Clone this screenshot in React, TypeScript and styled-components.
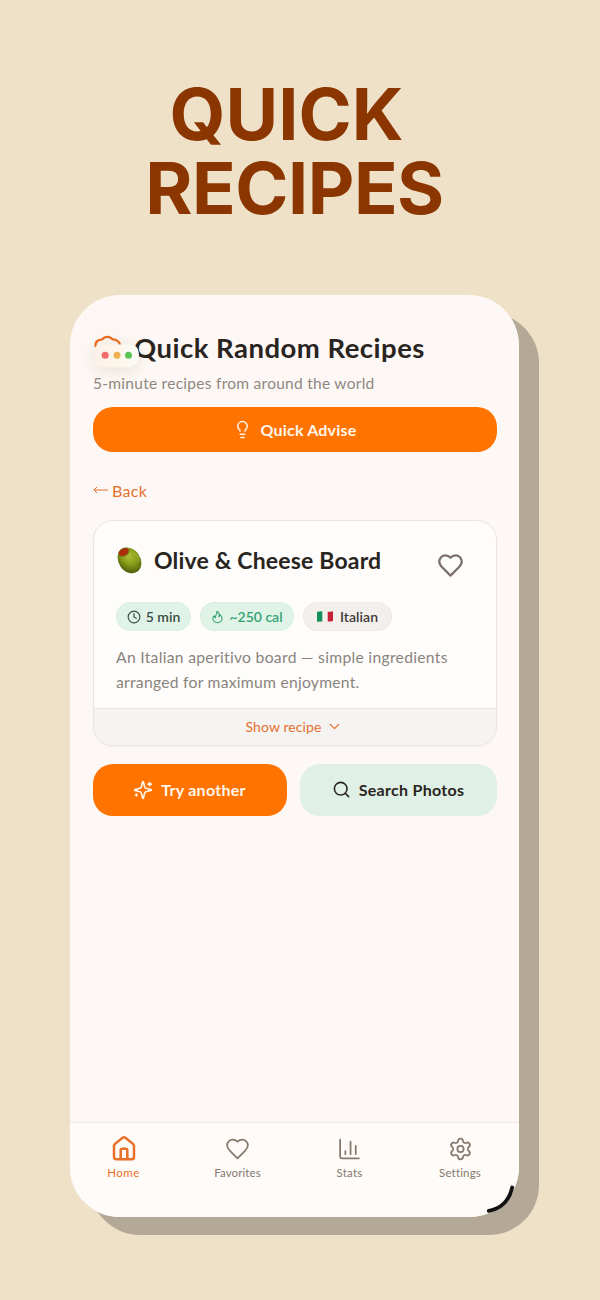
import React from "react";
import styled, { createGlobalStyle } from "styled-components";
import { ChartColumn, ChevronDown, Clock, Lightbulb, Search, Settings } from "lucide-react";

const Global = createGlobalStyle`
  * { box-sizing: border-box; }
  body { margin: 0; background: #efe1c8; font-family: Lato, "Open Sans", sans-serif; color: #292420; }
`;

const Page = styled.div`
  width: 600px;
  height: 1300px;
  background: #efe1c8;
  overflow: hidden;
  display: flex;
  flex-direction: column;
`;

const Headline = styled.h1`
  margin: 77px 0 0 -10px;
  height: 218px;
  font: 700 72px/74px Inter, sans-serif;
  color: #8b3600;
  text-align: center;
`;

const Line = styled.div<{ $ls: number; $inset?: number }>`
  letter-spacing: ${(p) => p.$ls}px;
  padding-right: ${(p) => p.$inset ?? 0}px;
`;

const Phone = styled.main`
  margin-left: 70px;
  width: 449px;
  height: 922px;
  border-radius: 50px;
  background: #fdf8f5;
  box-shadow: 20px 18px 0 #b4a997;
  display: flex;
  flex-direction: column;
  position: relative;
`;

const Content = styled.div`
  flex: 1;
  padding: 35px 22px 0 23px;
`;

const Label = styled.span<{ $size: number; $ls?: number; $weight?: number; $color?: string }>`
  font-size: ${(p) => p.$size}px;
  letter-spacing: ${(p) => p.$ls ?? 0}px;
  font-weight: ${(p) => p.$weight ?? 400};
  color: ${(p) => p.$color ?? "inherit"};
  white-space: nowrap;
`;

const TitleRow = styled.header`
  height: 36px;
  display: flex;
  align-items: center;
  padding: 0 0 1px 41px;
  position: relative;
`;

const Logo = styled.div`
  position: absolute;
  left: 0;
  top: 2px;
  width: 46px;
  height: 38px;
  filter: drop-shadow(0 3px 8px rgba(90, 60, 40, 0.13));
`;

const Subtitle = styled.div`
  height: 32px;
  line-height: 33px;
  margin-bottom: 9px;
`;

const Button = styled.button<{ $width: number; $height: number; $gap: number; $mint?: boolean }>`
  width: ${(p) => p.$width}px;
  height: ${(p) => p.$height}px;
  border: 0;
  padding: 0 1px 1px 0;
  border-radius: 20px;
  background: ${(p) => (p.$mint ? "#e0f0e6" : "#ff7300")};
  color: ${(p) => (p.$mint ? "#292420" : "#fff5ea")};
  font-family: inherit;
  display: flex;
  align-items: center;
  justify-content: center;
  gap: ${(p) => p.$gap}px;
`;

const Back = styled.div`
  margin-top: 23px;
  height: 30px;
  display: flex;
  align-items: center;
  gap: 4px;
  color: #e3702f;
`;

const Card = styled.section`
  margin-top: 15px;
  height: 226px;
  border: 1px solid #e9e5e2;
  border-radius: 20px;
  background: #fefdfb;
  overflow: hidden;
  display: flex;
  flex-direction: column;
  box-shadow: 0 1px 2px rgba(80, 60, 40, 0.06);
`;

const CardBody = styled.div`
  flex: 1;
  padding: 21px 32px 0 22px;
`;

const CardTitle = styled.div`
  height: 36px;
  display: flex;
  align-items: center;
  gap: 10px;
  & > :last-child { margin: 11px 0 0 auto; color: #7b6f6a; }
`;

const Chips = styled.div`
  display: flex;
  gap: 9px;
  margin: 24px 0 14px;
`;

const Chip = styled.div<{ $width: number; $bg: string; $fg: string; $gap: number }>`
  width: ${(p) => p.$width}px;
  height: 29px;
  border-radius: 15px;
  border: 1px solid rgba(60, 70, 60, 0.03);
  background: ${(p) => p.$bg};
  color: ${(p) => p.$fg};
  display: flex;
  align-items: center;
  justify-content: center;
  gap: ${(p) => p.$gap}px;
`;

const Description = styled.div`
  display: flex;
  flex-direction: column;
  line-height: 24.5px;
  color: #8a837d;
`;

const CardFooter = styled.div`
  height: 37px;
  padding: 0 2px 1px 0;
  border-top: 1px solid #e8e5e3;
  background: #f6f4f3;
  color: #e3702f;
  display: flex;
  align-items: center;
  justify-content: center;
  gap: 4px;
`;

const Actions = styled.div`
  margin-top: 18px;
  display: flex;
  gap: 13px;
`;

const Nav = styled.nav`
  height: 95px;
  border-top: 1px solid #efe9e6;
  background: #fefbf8;
  border-radius: 0 0 50px 50px;
  display: flex;
  padding-top: 12px;
`;

const NavItem = styled.div<{ $width: number; $active?: boolean }>`
  width: ${(p) => p.$width}px;
  display: flex;
  flex-direction: column;
  align-items: center;
  gap: 2px;
  color: ${(p) => (p.$active ? "#e8702a" : "#85796f")};
  & > svg { height: 28px; }
  & > span { margin-top: 1px; }
`;

const CornerMark = styled.svg`
  position: absolute;
  right: 0;
  bottom: 0;
`;

function HeartIcon({ size, width = 2 }: { size: number; width?: number }) {
  return (
    <svg width={size} height={size} viewBox="0 0 24 24" fill="none" stroke="currentColor" strokeWidth={width} strokeLinecap="round" strokeLinejoin="round">
      <path d="M19 14c1.49-1.46 3-3.21 3-5.5A5.5 5.5 0 0 0 16.5 3c-1.76 0-3 .5-4.5 2-1.5-1.5-2.74-2-4.5-2A5.5 5.5 0 0 0 2 8.5c0 2.3 1.5 4.05 3 5.5l7 7Z" />
    </svg>
  );
}

function HomeIcon() {
  return (
    <svg width="28" height="28" viewBox="0 0 28 28" fill="none" stroke="currentColor" strokeWidth="2.5" strokeLinecap="round" strokeLinejoin="round">
      <path d="M4 10.900c0-.8.3-1.500 1-2L12.600 2.800a2.200 2.200 0 0 1 2.800 0L23 8.900c.7.5 1 1.200 1 2V22a2.200 2.200 0 0 1-2.200 2.200H6.200A2.200 2.200 0 0 1 4 22Z" />
      <path d="M10.700 24V15a1.300 1.300 0 0 1 1.300-1.300h4a1.300 1.300 0 0 1 1.300 1.300V24" />
    </svg>
  );
}

function FlameIcon() {
  return (
    <svg width="13" height="14" viewBox="0 0 24 24" fill="none" stroke="currentColor" strokeWidth="2" strokeLinecap="round" strokeLinejoin="round">
      <path d="M11 1.500c3.500 2 5 5.500 3.500 10 2-.5 2.500-2 2.500-3.500 2.200 2 3.500 4 3.500 6.500a8.500 8 0 0 1-17 0c0-2 .5-3.500 2-4.500 .3 2 1 3 2.500 3.500C7.500 9 11.500 6.500 11 1.500Z" />
    </svg>
  );
}

function SparklesIcon() {
  return (
    <svg width="20" height="20" viewBox="0 0 24 24" fill="none" stroke="currentColor" strokeWidth="2" strokeLinecap="round" strokeLinejoin="round">
      <path d="M9.937 15.500A2 2 0 0 0 8.500 14.063l-6.135-1.582a.5.5 0 0 1 0-.962L8.500 9.936A2 2 0 0 0 9.937 8.500l1.582-6.135a.5.5 0 0 1 .963 0L14.063 8.500A2 2 0 0 0 15.500 9.937l6.135 1.581a.5.5 0 0 1 0 .964L15.500 14.063a2 2 0 0 0-1.437 1.437l-1.582 6.135a.5.5 0 0 1-.963 0z" />
      <path d="M20 3v4M22 5h-4M4 17v2M5 18H3" />
    </svg>
  );
}

function Olive() {
  return (
    <svg width="28" height="28" viewBox="0 0 28 28">
      <defs>
        <radialGradient id="olive" cx="0.6" cy="0.36" r="0.68">
          <stop offset="0" stopColor="#b0bd35" />
          <stop offset="0.5" stopColor="#879c18" />
          <stop offset="1" stopColor="#4a5c0a" />
        </radialGradient>
      </defs>
      <ellipse cx="13.500" cy="14.400" rx="10.900" ry="13.700" transform="rotate(-35 13.500 14.400)" fill="url(#olive)" />
      <ellipse cx="7.900" cy="6.200" rx="6" ry="4.200" transform="rotate(-28 7.900 6.200)" fill="#7c7826" />
      <ellipse cx="7.700" cy="6" rx="5.200" ry="3.400" transform="rotate(-28 7.700 6)" fill="#ab2c0c" />
      <path d="M18 7c3 2 4.500 5 4.500 8" stroke="#cbd45d" strokeWidth="1.300" opacity=".4" fill="none" strokeLinecap="round" />
    </svg>
  );
}

function Flag() {
  return (
    <svg width="16" height="11" viewBox="0 0 16 11">
      <path fill="#f3f1ed" d="M0 .8Q4 0 8 .6T16 .2V10Q12 10.900 8 10.300T0 10.800Z" />
      <path fill="#16905a" d="M0 .8Q3 .2 5.300 .4V10.400Q3 10.300 0 10.800Z" />
      <path fill="#c82238" d="M10.700 .7Q13 .8 16 .2V10Q13 10.700 10.700 10.500Z" />
    </svg>
  );
}

export default function App() {
  return (
    <Page>
      <Global />
      <Headline>
        <Line $ls={0} $inset={17}>QUICK</Line>
        <Line $ls={-0.5} $inset={1}>RECIPES</Line>
      </Headline>
      <Phone>
        <Content>
          <TitleRow>
            <Label $size={27.5} $weight={700} $ls={0.48}>Quick Random Recipes</Label>
            <Logo>
              <svg width="46" height="38" viewBox="0 0 46 38">
                <defs>
                  <linearGradient id="tray">
                    <stop offset="0" stopColor="#fdf0e9" />
                    <stop offset="0.5" stopColor="#fdf6ea" />
                    <stop offset="1" stopColor="#fbfcf8" />
                  </linearGradient>
                </defs>
                <path d="M2.800 15C1.500 10 5 7.500 9 7.500C12 3.800 17 4.200 19.500 7.300C23.500 7.500 26 9 27 12.500" fill="none" stroke="#e96a1c" strokeWidth="2.200" strokeLinecap="round" />
                <path d="M1.500 20C1.500 14 4 12 9 12.500H37Q46 13 46 22.500T37 35.500H10Q1.500 35.500 1.500 28Z" fill="url(#tray)" />
                <circle cx="12.200" cy="23.300" r="3.500" fill="#f26c6d" />
                <circle cx="24" cy="23.300" r="3.500" fill="#efb050" />
                <circle cx="35.500" cy="23.300" r="3.500" fill="#5bc454" />
              </svg>
            </Logo>
          </TitleRow>
          <Subtitle>
            <Label $size={15.5} $ls={0.27} $color="#8e8781">5-minute recipes from around the world</Label>
          </Subtitle>
          <Button $width={404} $height={45} $gap={9}>
            <Lightbulb size={19} strokeWidth={1.9} />
            <Label $size={16} $weight={700} $ls={0.18}>Quick Advise</Label>
          </Button>
          <Back>
            <svg width="15" height="10" viewBox="0 0 15 10" fill="none" stroke="currentColor" strokeWidth="1">
              <path d="M15 5H.8M4 2L1 5l3 3" />
            </svg>
            <Label $size={16} $ls={0.3}>Back</Label>
          </Back>
          <Card>
            <CardBody>
              <CardTitle>
                <Olive />
                <Label $size={23} $weight={700} $ls={0.18}>Olive &amp; Cheese Board</Label>
                <HeartIcon size={27} />
              </CardTitle>
              <Chips>
                <Chip $width={75} $bg="#e0f3e8" $fg="#3b4c43" $gap={5}>
                  <Clock size={14} />
                  <Label $size={14} $weight={600}>5 min</Label>
                </Chip>
                <Chip $width={94} $bg="#dff3e7" $fg="#36a273" $gap={5}>
                  <FlameIcon />
                  <Label $size={14} $weight={600}>~250 cal</Label>
                </Chip>
                <Chip $width={89} $bg="#f2efed" $fg="#403a36" $gap={7}>
                  <Flag />
                  <Label $size={14} $weight={600} $ls={0.05}>Italian</Label>
                </Chip>
              </Chips>
              <Description>
                <Label $size={15.7} $ls={0.29}>An Italian aperitivo board — simple ingredients</Label>
                <Label $size={15.7} $ls={0.25}>arranged for maximum enjoyment.</Label>
              </Description>
            </CardBody>
            <CardFooter>
              <Label $size={14} $ls={0.1}>Show recipe</Label>
              <ChevronDown size={17} strokeWidth={1.8} />
            </CardFooter>
          </Card>
          <Actions>
            <Button $width={194} $height={52} $gap={8}>
              <SparklesIcon />
              <Label $size={16} $weight={700} $ls={0.28}>Try another</Label>
            </Button>
            <Button $width={197} $height={52} $gap={8} $mint>
              <Search size={19} />
              <Label $size={16} $weight={700} $ls={0.28}>Search Photos</Label>
            </Button>
          </Actions>
        </Content>
        <Nav>
          <NavItem $width={107} $active>
            <HomeIcon />
            <Label $size={11.5} $ls={0.4}>Home</Label>
          </NavItem>
          <NavItem $width={121}>
            <HeartIcon size={25} width={1.7} />
            <Label $size={11.5} $ls={0.1}>Favorites</Label>
          </NavItem>
          <NavItem $width={103}>
            <ChartColumn size={25} strokeWidth={1.7} />
            <Label $size={11.5} $ls={0.2}>Stats</Label>
          </NavItem>
          <NavItem $width={118}>
            <Settings size={25} strokeWidth={1.7} />
            <Label $size={11.5} $ls={0.15}>Settings</Label>
          </NavItem>
        </Nav>
        <CornerMark width="36" height="36" viewBox="0 0 36 36">
          <path d="M29.200 6.500C26.500 18 19 27.500 5.800 29.800" fill="none" stroke="#111" strokeWidth="3.800" strokeLinecap="round" />
        </CornerMark>
      </Phone>
    </Page>
  );
}
